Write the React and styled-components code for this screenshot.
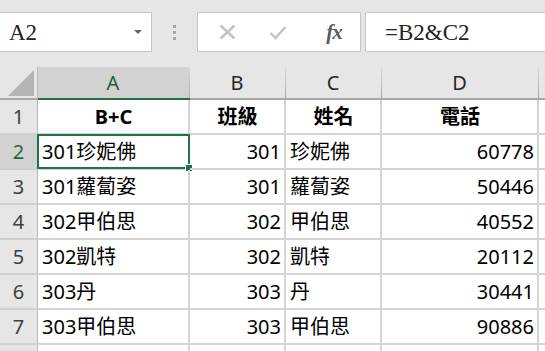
import React from 'react';
import styled, { createGlobalStyle } from 'styled-components';

const GlobalStyle = createGlobalStyle`
  html, body {
    margin: 0;
    padding: 0;
    background: #ffffff;
    overflow: hidden;
  }
`;

const GREEN = '#217346';
const GRID = '#d4d4d4';
const CELL_FONT = `"Noto Sans", "Noto Sans CJK TC", sans-serif`;

const Page = styled.div`
  width: 545px;
  height: 351px;
  overflow: hidden;
  background: #ffffff;
  font-family: ${CELL_FONT};
`;

const FormulaBar = styled.div`
  height: 67px;
  box-sizing: border-box;
  padding-top: 12px;
  background: #e6e6e6;
  display: flex;
  align-items: flex-start;
`;

const Field = styled.div`
  height: 40px;
  box-sizing: border-box;
  border: 1px solid #c6c6c6;
  background: #ffffff;
  display: flex;
  align-items: center;
`;

const NameBox = styled(Field)`
  width: 153px;
  margin-left: -1px;
  padding: 2px 9px 0 9px;
  justify-content: space-between;
  font-family: "Liberation Serif", serif;
  font-size: 23px;
  color: #222;
`;

const DropArrow = styled.span`
  width: 0;
  height: 0;
  border-left: 4px solid transparent;
  border-right: 4px solid transparent;
  border-top: 4px solid #666;
  margin-top: -3px;
`;

const Grip = styled.div`
  width: 45px;
  height: 40px;
  display: flex;
  flex-direction: column;
  align-items: center;
  justify-content: center;
  gap: 3px;
`;

const GripDot = styled.span`
  width: 3px;
  height: 3px;
  background: #a6a6a6;
`;

const FxBox = styled(Field)`
  width: 164px;
  display: grid;
  grid-template-columns: 58px 44px 1fr;
`;

const IconButton = styled.div`
  display: flex;
  align-items: center;
  justify-content: center;
  height: 100%;
  padding-left: ${p => p.$shift || 0}px;
`;

const FxText = styled.span`
  font-family: "Liberation Serif", serif;
  font-style: italic;
  font-weight: bold;
  font-size: 21px;
  color: #5a5a5a;
  letter-spacing: -1px;
`;

const FormulaInput = styled(Field)`
  flex: 1;
  margin-left: 4px;
  margin-right: -1px;
  padding: 2px 0 0 19px;
  font-family: "Liberation Serif", serif;
  font-size: 23px;
  color: #222;
`;

const Sheet = styled.div`
  display: grid;
  grid-template-columns: 38px 152px 96px 96px 157px 1fr;
  grid-template-rows: 33px;
  grid-auto-rows: 35px;
`;

const Corner = styled.div`
  background: #e6e6e6;
  box-sizing: border-box;
  border-right: 1px solid #b9b9b9;
  border-bottom: 2px solid #a8a8a8;
  position: relative;
  &::after {
    content: '';
    position: absolute;
    right: 3px;
    bottom: 2px;
    width: 26px;
    height: 26px;
    background: #b4b4b4;
    clip-path: polygon(100% 0, 100% 100%, 0 100%);
  }
`;

const ColHead = styled.div`
  position: relative;
  box-sizing: border-box;
  background: ${p => (p.$active ? '#d2d2d2' : '#e6e6e6')};
  border-bottom: 2px solid ${p => (p.$active ? GREEN : '#a8a8a8')};
  color: ${p => (p.$active ? '#1f5c3c' : '#262626')};
  font-size: 20px;
  display: flex;
  align-items: center;
  justify-content: center;
  padding-right: 2px;
  &::after {
    content: '';
    position: absolute;
    top: 0;
    right: 0;
    width: 1px;
    height: 100%;
    background: linear-gradient(#dcdcdc, #a6a6a6);
  }
`;

const RowHead = styled.div`
  box-sizing: border-box;
  background: ${p => (p.$active ? '#d2d2d2' : '#e6e6e6')};
  color: ${p => (p.$active ? '#1f6b42' : '#404040')};
  border-right: 1px solid #b9b9b9;
  border-bottom: 2px solid #d0d0d0;
  font-size: 20px;
  line-height: 1.2;
  display: flex;
  align-items: center;
  justify-content: center;
`;

const Cell = styled.div`
  position: relative;
  box-sizing: border-box;
  border-right: 2px solid ${GRID};
  border-bottom: 2px solid ${GRID};
  padding: 0 3px 0 4px;
  font-size: 20px;
  line-height: 1.2;
  font-weight: ${p => (p.$bold ? 700 : 400)};
  color: #000;
  white-space: nowrap;
  display: flex;
  align-items: center;
  justify-content: ${p =>
    p.$align === 'right' ? 'flex-end' : p.$align === 'center' ? 'center' : 'flex-start'};
`;

const Selection = styled.div`
  position: absolute;
  left: -1px;
  top: -1px;
  right: -2px;
  bottom: -1px;
  border: 2px solid ${GREEN};
  pointer-events: none;
  &::after {
    content: '';
    position: absolute;
    right: -5px;
    bottom: -5px;
    width: 6px;
    height: 6px;
    background: ${GREEN};
    border: 1px solid #ffffff;
  }
`;

const columns = ['A', 'B', 'C', 'D', ''];

const rows = [
  { a: 'B+C', b: '班級', c: '姓名', d: '電話', head: true },
  { a: '301珍妮佛', b: '301', c: '珍妮佛', d: '60778' },
  { a: '301蘿蔔姿', b: '301', c: '蘿蔔姿', d: '50446' },
  { a: '302甲伯思', b: '302', c: '甲伯思', d: '40552' },
  { a: '302凱特', b: '302', c: '凱特', d: '20112' },
  { a: '303丹', b: '303', c: '丹', d: '30441' },
  { a: '303甲伯思', b: '303', c: '甲伯思', d: '90886' },
  { a: '', b: '', c: '', d: '', blank: true },
];

const CloseIcon = () => (
  <svg width="17" height="16" viewBox="0 0 17 16">
    <path d="M1.5 1.5 L15.5 14.5 M15.5 1.5 L1.5 14.5" stroke="#c2c2c2" strokeWidth="2.4" fill="none" />
  </svg>
);

const CheckIcon = () => (
  <svg width="18" height="15" viewBox="0 0 18 15">
    <path d="M1.5 8 L6.5 13 L16.5 2" stroke="#c2c2c2" strokeWidth="2.4" fill="none" />
  </svg>
);

export default function App() {
  return (
    <Page>
      <GlobalStyle />
      <FormulaBar>
        <NameBox>
          <span>A2</span>
          <DropArrow />
        </NameBox>
        <Grip>
          <GripDot />
          <GripDot />
          <GripDot />
        </Grip>
        <FxBox>
          <IconButton><CloseIcon /></IconButton>
          <IconButton><CheckIcon /></IconButton>
          <IconButton $shift={8}><FxText>fx</FxText></IconButton>
        </FxBox>
        <FormulaInput>=B2&amp;C2</FormulaInput>
      </FormulaBar>

      <Sheet>
        <Corner />
        {columns.map((c, i) => (
          <ColHead key={i} $active={c === 'A'}>{c}</ColHead>
        ))}
        {rows.map((r, i) => (
          <React.Fragment key={i}>
            <RowHead $active={i === 1}>{r.blank ? '' : i + 1}</RowHead>
            <Cell $bold={r.head} $align={r.head ? 'center' : 'left'}>
              {r.a}
              {i === 1 && <Selection />}
            </Cell>
            <Cell $bold={r.head} $align={r.head ? 'center' : 'right'}>{r.b}</Cell>
            <Cell $bold={r.head} $align={r.head ? 'center' : 'left'}>{r.c}</Cell>
            <Cell $bold={r.head} $align={r.head ? 'center' : 'right'}>{r.d}</Cell>
            <Cell />
          </React.Fragment>
        ))}
      </Sheet>
    </Page>
  );
}
